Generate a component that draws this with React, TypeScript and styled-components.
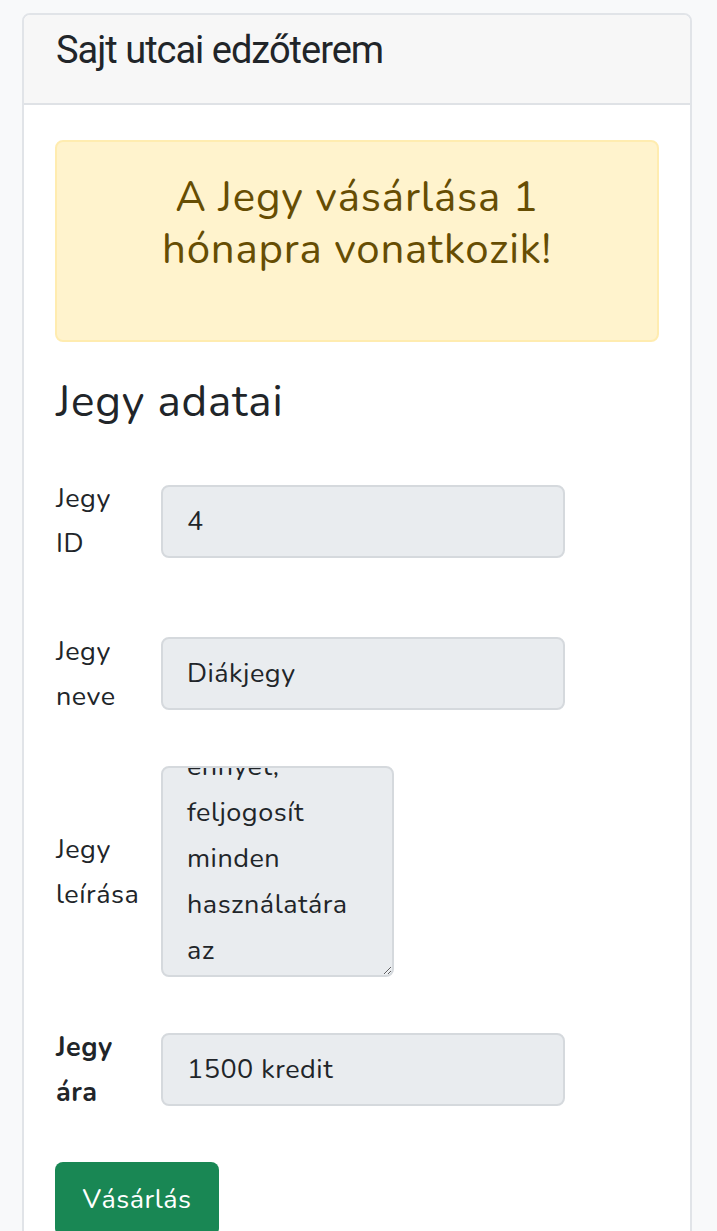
import React, { useLayoutEffect, useRef } from "react";
import styled, { createGlobalStyle } from "styled-components";

const GlobalStyle = createGlobalStyle`
  html, body { margin: 0; padding: 0; background: #f8f9fa; }
  body { font-family: Nunito, "Noto Sans", sans-serif; color: #212529; }
  *, *::before, *::after { box-sizing: border-box; }
`;

const Page = styled.div`
  height: 100vh;
  overflow: hidden;
  padding: 13px 25px 0 22px;
`;

const Card = styled.section`
  width: 670px;
  background: #fff;
  border: 2px solid #e1e4e8;
  border-radius: 8px;
  overflow: hidden;
`;

const CardHeader = styled.header`
  height: 90px;
  padding: 0 32px;
  background: #f7f7f7;
  border-bottom: 2px solid #dfe2e6;
  font-family: Roboto, "Noto Sans", sans-serif;
  font-size: 38px;
  letter-spacing: -1px;
  line-height: 70px;
  color: #212529;
`;

const CardBody = styled.div`
  padding: 35px 31px 40px;
  display: flex;
  flex-direction: column;
`;

const Alert = styled.div`
  height: 202px;
  padding: 30px 80px 0;
  background: #fff3cd;
  border: 2px solid #ffecb0;
  border-radius: 8px;
  color: #664d03;
  text-align: center;
  font-size: 42px;
  letter-spacing: 0.8px;
  line-height: 52px;
`;

const Heading = styled.h2`
  margin: 35px 0 34px;
  padding-left: 1px;
  font-size: 44px;
  letter-spacing: 0.8px;
  font-weight: 400;
  line-height: 50px;
`;

const Form = styled.form`
  display: flex;
  flex-direction: column;
  gap: 32.5px;
`;

const Row = styled.div`
  display: grid;
  grid-template-columns: 106px 404px;
  align-items: center;
`;

const Label = styled.label<{ $bold?: boolean }>`
  width: min-content;
  padding: 15px 0 15px 1px;
  font-size: 27px;
  letter-spacing: 0.5px;
  line-height: 45px;
  font-weight: ${(p) => (p.$bold ? 700 : 400)};
`;

const Field = styled.div`
  height: 73px;
  display: flex;
  align-items: center;
  padding: 0 24px;
  background: #e9ecef;
  border: 2px solid #d5d9dd;
  border-radius: 8px;
  font-size: 27px;
  letter-spacing: 0.5px;
  color: #212529;
`;

const TextArea = styled.textarea`
  width: 233px;
  height: 211px;
  padding: 10px 24px;
  background: #e9ecef;
  border: 2px solid #d5d9dd;
  border-radius: 8px;
  font-family: inherit;
  font-size: 27px;
  letter-spacing: 0.5px;
  line-height: 46px;
  color: #212529;
  resize: vertical;
  overflow: hidden;
`;

const BuyButton = styled.button`
  margin-top: 32.5px;
  width: 164px;
  height: 74px;
  background: #198754;
  border: none;
  border-radius: 8px;
  color: #fff;
  font-family: inherit;
  font-size: 27px;
  letter-spacing: 0.5px;
`;

const description = [
  "Ez a jegy",
  "diákoknak",
  "kínál",
  "ennyet,",
  "feljogosít",
  "minden",
  "használatára",
  "az",
  "edzőterem",
  "eszközeinek.",
].join("\n");

export default function App() {
  const ref = useRef<HTMLTextAreaElement>(null);
  useLayoutEffect(() => {
    if (ref.current) ref.current.scrollTop = 10 + 3 * 46 + 24;
  }, []);
  return (
    <>
      <GlobalStyle />
      <Page>
        <Card>
          <CardHeader>Sajt utcai edzőterem</CardHeader>
          <CardBody>
            <Alert>A Jegy vásárlása 1 hónapra vonatkozik!</Alert>
            <Heading>Jegy adatai</Heading>
            <Form onSubmit={(e) => e.preventDefault()}>
              <Row>
                <Label>Jegy ID</Label>
                <Field>4</Field>
              </Row>
              <Row>
                <Label>Jegy neve</Label>
                <Field>Diákjegy</Field>
              </Row>
              <Row>
                <Label>Jegy leírása</Label>
                <TextArea ref={ref} readOnly defaultValue={description} />
              </Row>
              <Row>
                <Label $bold>Jegy ára</Label>
                <Field>1500 kredit</Field>
              </Row>
            </Form>
            <BuyButton type="button">Vásárlás</BuyButton>
          </CardBody>
        </Card>
      </Page>
    </>
  );
}
